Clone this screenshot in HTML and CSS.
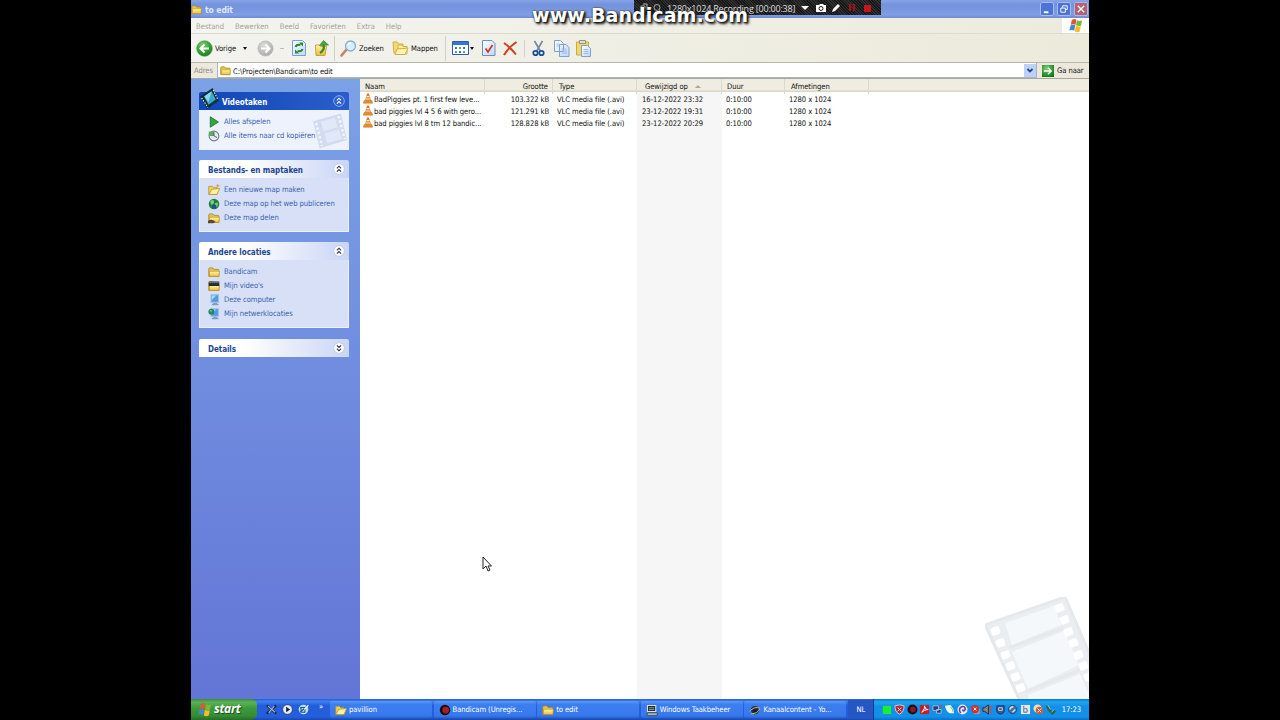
FILE: index.html
```
<!DOCTYPE html>
<html lang="nl">
<head>
    <meta charset="UTF-8">
    <title>to edit</title>
    <link rel="stylesheet" href="styles.css">
</head>
<body>
    <svg class="defs" width="0" height="0">
        <defs>
            <linearGradient id="gFolder" x1="0" y1="0" x2="0" y2="1"><stop offset="0" stop-color="#fff6a8"/><stop offset="1" stop-color="#e8bd3c"/></linearGradient>
            <radialGradient id="gGreen" cx=".4" cy=".3" r=".8"><stop offset="0" stop-color="#83cf7c"/><stop offset=".6" stop-color="#2f9a31"/><stop offset="1" stop-color="#17701c"/></radialGradient>
            <radialGradient id="gGrey" cx=".4" cy=".3" r=".8"><stop offset="0" stop-color="#dcdcd8"/><stop offset="1" stop-color="#a5a5a2"/></radialGradient>
            <linearGradient id="gPage" x1="0" y1="0" x2="1" y2="1"><stop offset="0" stop-color="#fff"/><stop offset="1" stop-color="#bdd6fa"/></linearGradient>
            <symbol id="folder" viewBox="0 0 16 16">
                <path d="M1 4q0-1.500 1.500-1.500h4L8 4.500h5.500q1 0 1 1V14H1z" fill="#e8c34c" stroke="#a67e1e"/>
                <path d="M2 7h13.200L14.500 14H2z" fill="url(#gFolder)" stroke="#b58b25" stroke-width=".8"/>
            </symbol>
            <symbol id="openfolder" viewBox="0 0 16 16">
                <path d="M1 3h5l1.500 2H12v9H1z" fill="#f0d15c" stroke="#b58a25"/>
                <path d="M5 7l10.500-1L12 14H1.500z" fill="#fff09a" stroke="#b88f2c"/>
            </symbol>
            <symbol id="monitor" viewBox="0 0 16 16">
                <path d="M4 1h10v10H4z" fill="#4f9bea" stroke="#a5bcdc" stroke-width="1.500"/>
                <path d="M5 2h6L5 8z" fill="#a9daff"/>
                <path d="M7 12h5v1h2v2H5v-2h2z" fill="#7f9ac6"/>
            </symbol>
            <symbol id="globe" viewBox="0 0 16 16">
                <circle cx="8" cy="8" r="7" fill="#217d4a"/>
                <path d="M3 4q5-3 5 1T4 9zM9 7l4-1q1 5-3 7z" fill="#7fd46c"/>
                <path d="M6 9h5v5H6z" fill="#18568f"/>
            </symbol>
            <symbol id="cone" viewBox="0 0 16 16">
                <path d="M6.500 0h3L13 11H3z" fill="#e07a20"/>
                <path d="M5.800 4h4.400l.7 2H5.100zM4.200 8h7.600l.5 1.500H3.700z" fill="#fff4e6"/>
                <path d="M2 11h12l1.500 4.500H.5z" fill="#ee8f26" stroke="#a95b19" stroke-width=".7"/>
            </symbol>
            <symbol id="flag" viewBox="0 0 16 16">
                <path d="M4 2q3-2 5 0L8 7.500q-2.500-1.500-5 0z" fill="#e5562b"/>
                <path d="M9.500 2.500q3 1.500 5.500 0L14 8q-2.500 1.300-5.500-.3z" fill="#77b83a"/>
                <path d="M2.700 8q2.500-1.600 5-.2L6.600 13.500Q4 12 1.500 13.500z" fill="#3f87dd"/>
                <path d="M8.300 8.200q2.700 1.600 5.400.3L12.500 14.500q-2.500 1.500-5.200 0z" fill="#f6bd26"/>
            </symbol>
            <symbol id="up" viewBox="0 0 12 12">
                <circle cx="6" cy="6" r="5.300" fill="var(--c, #fff)" stroke="var(--r, #b9c5e3)" stroke-width=".8"/>
                <path d="M3.900 5.300L6 3.200l2.100 2.100M3.900 8.700L6 6.600l2.100 2.100" fill="none" stroke="var(--s, #222d48)" stroke-width="1.100"/>
            </symbol>
        </defs>
    </svg>

    <div class="desktop">
        <div class="titlebar">
            <svg class="i11"><use href="#folder"/></svg>
            <span class="title">to edit</span>
            <div class="winbtns">
                <svg class="winbtn" viewBox="0 0 13 13"><path d="M3 9h5v2H3z" fill="#fff"/></svg>
                <svg class="winbtn" viewBox="0 0 13 13"><path d="M5 5V3h5v4H8M3 5.500h5V10H3z" fill="none" stroke="#fff"/></svg>
                <svg class="winbtn close" viewBox="0 0 13 13"><path d="M3 3l7 7M10 3l-7 7" stroke="#fff" stroke-width="1.500"/></svg>
            </div>
        </div>

        <div class="menubar">
            <span>Bestand</span><span>Bewerken</span><span>Beeld</span><span>Favorieten</span><span>Extra</span><span>Help</span>
            <div class="logo"><svg width="15" height="15"><use href="#flag"/></svg></div>
        </div>

        <div class="toolbar">
            <div class="tool back">
                <svg width="17" height="17" viewBox="0 0 17 17"><circle cx="8.500" cy="8.500" r="7.800" fill="url(#gGreen)" stroke="#4b9b4b" stroke-width=".6"/><path d="M13 8.500H5M8.500 4.500l-4 4 4 4" fill="none" stroke="#fff" stroke-width="2"/></svg>
                <span>Vorige</span>
                <i class="caret"></i>
            </div>
            <div class="tool fwd">
                <svg width="17" height="17" viewBox="0 0 17 17"><circle cx="8.500" cy="8.500" r="7.600" fill="url(#gGrey)" stroke="#b4b4b0" stroke-width=".6"/><path d="M4 8.500h8M8.500 4.500l4 4-4 4" fill="none" stroke="#fff" stroke-width="2"/></svg>
                <i class="dash"></i>
            </div>
            <svg class="tool refresh" width="14" height="16" viewBox="0 0 14 16"><path d="M.5.500h10l3 3v12H.5z" fill="url(#gPage)" stroke="#7b9fd2"/><path d="M3.500 7q1-3 5-2M10.500 9q-1 3-5 2" fill="none" stroke="#238a34" stroke-width="2"/><path d="M7 2.500h4v4zM7 13.500H3v-4z" fill="#238a34"/></svg>
            <svg class="tool upfolder" width="14" height="16" viewBox="0 0 14 16"><path d="M.5 5h4l1 1.500h6l-1.500 9H1z" fill="url(#gFolder)" stroke="#c6a63a"/><path d="M5 13q5-3 3.500-8" fill="none" stroke="#3a8c2d" stroke-width="2.200"/><path d="M4.500 5.500L8.500.500l5 4.500z" fill="#4fa43a" stroke="#2d7522" stroke-width=".6"/></svg>
            <div class="tool search">
                <svg width="17" height="17" viewBox="0 0 17 17"><path d="M1.500 15.500l5-6" stroke="#c5825c" stroke-width="2.600" stroke-linecap="round"/><circle cx="10.500" cy="6" r="5" fill="#d5efff" stroke="#88abd0" stroke-width="1.300"/><path d="M8 5q1-2 3-2" stroke="#fff" fill="none" stroke-width="1.300"/></svg>
                <span>Zoeken</span>
            </div>
            <div class="tool maps">
                <svg width="17" height="16" viewBox="0 0 17 16"><path d="M1 2h4l1.500 2H11v9H2z" fill="#f1dc73" stroke="#d2ae45"/><path d="M6 5h4l1 1.500h4V14H6z" fill="#fff3a4" stroke="#d2ae45"/><path d="M5 9l11-1-3 6.500H3z" fill="#fff6b6" stroke="#d2ae45"/></svg>
                <span>Mappen</span>
            </div>
            <div class="tool views">
                <svg width="17" height="14" viewBox="0 0 17 14"><path d="M.5.500h16v13H.5z" fill="#fff" stroke="#295cae"/><path d="M1 1h15v3H1z" fill="#3774d3"/><path d="M3 6h2v2H3zM11 6h2v2h-2zM7 10h2v2H7z" fill="#4b6daa"/><path d="M7 6h2v2H7zM3 10h2v2H3zM11 10h2v2h-2z" fill="#559f94"/></svg>
                <i class="caret"></i>
            </div>
            <svg class="tool check" width="14" height="16" viewBox="0 0 14 16"><path d="M.5.500h9.500l3 3v12H.5z" fill="url(#gPage)" stroke="#6c8fc4"/><path d="M3.500 8.500L6 12l4.500-7" fill="none" stroke="#cf392b" stroke-width="1.800"/></svg>
            <svg class="tool delete" width="15" height="15" viewBox="0 0 15 15"><path d="M1 2q6 4 12 11.500M13.500 1Q6 6 1 14" fill="none" stroke="#d23c1c" stroke-width="2"/></svg>
            <svg class="tool cut" width="13" height="17" viewBox="0 0 13 17"><path d="M2.500 1l5.800 10M10.500 1L4.700 11" stroke="#7888a0" stroke-width="1.700"/><circle cx="3.500" cy="13" r="2.200" fill="none" stroke="#174d9c" stroke-width="1.800"/><circle cx="9.500" cy="13" r="2.200" fill="none" stroke="#174d9c" stroke-width="1.800"/></svg>
            <svg class="tool copy" width="16" height="17" viewBox="0 0 16 17"><path d="M.5.500h6l3 3v8h-9zM5.500 4.500h6.500l3 3v9H5.500z" fill="url(#gPage)" stroke="#7da0d3"/><path d="M7.500 9H12M7.500 11h5.500M7.500 13h5.500M2.500 4h3M2.500 6H5" stroke="#9bb9e3"/></svg>
            <svg class="tool paste" width="16" height="17" viewBox="0 0 16 17"><path d="M.5 2h12v13H.5z" fill="#f2d967" stroke="#cda943"/><path d="M3.500.500h6v3h-6z" fill="#ddd" stroke="#999178"/><path d="M5.500 5.500h6l3 3v8h-9z" fill="url(#gPage)" stroke="#7da0d3"/><path d="M7.500 9.500H12M7.500 11.500h5M7.500 13.500h5" stroke="#9bb9e3"/></svg>
        </div>

        <div class="addressbar">
            <span class="label">Adres</span>
            <div class="field">
                <svg class="i11"><use href="#folder"/></svg>
                <span>C:\Projecten\Bandicam\to edit</span>
                <svg class="drop" viewBox="0 0 12 13"><path d="M3.500 5L6 7.500 8.500 5" fill="none" stroke="#294882" stroke-width="1.800"/></svg>
            </div>
            <svg class="go" viewBox="0 0 13 13"><path d="M0 0h13v13H0z" fill="url(#gGreen)"/><path d="M2 6.500h8M6.500 3L10 6.500 6.500 10" fill="none" stroke="#fff" stroke-width="1.400"/></svg>
            <span class="golabel">Ga naar</span>
        </div>

        <div class="main">
            <div class="sidebar">
                <div class="panel video">
                    <div class="panel-head"><svg class="reel" viewBox="0 0 20 20"><path d="M1 8L13 0l6 12L8 20z" fill="#0d3142"/><path d="M5 8l7-5 4 8-7 5z" fill="#3ba9cd"/><path d="M5 8l7-5-3 10z" fill="#8fd9e8"/><path d="M2.500 9.500l6 9M13.500 2l4.500 9" stroke="#fff" stroke-dasharray="1.300 1.300"/></svg><b>Videotaken</b><svg class="toggle"><use href="#up"/></svg></div>
                    <div class="panel-body">
                        <svg class="ghost" viewBox="0 0 100 100"><path d="M0 22L80 0l17 76-78 24z" fill="#d2dbef"/><path d="M22 23l40-11 9 27-41 12zM33 57l41-12 9 27-43 13z" fill="#e1e8f7"/><path d="M9 27l17 66M73 7l18 66" stroke="#f2f5fc" stroke-width="7" stroke-dasharray="7 6"/></svg>
                        <a><svg class="i12" viewBox="0 0 16 16"><path d="M3 1l11 7-11 7z" fill="#2fa73c" stroke="#176b25"/></svg>Alles afspelen</a>
                        <a><svg class="i12" viewBox="0 0 16 16"><circle cx="8" cy="8" r="6.500" fill="#e5eaed" stroke="#6d7e87" stroke-width="1.500"/><path d="M1 2h7v6H1z" fill="#5fa764"/><path d="M8 3v5l4 2" fill="none" stroke="#435"/></svg>Alle items naar cd kopiëren</a>
                    </div>
                </div>
                <div class="panel files">
                    <div class="panel-head"><b>Bestands- en maptaken</b><svg class="toggle"><use href="#up"/></svg></div>
                    <div class="panel-body">
                        <a><svg class="i12" viewBox="0 0 16 16"><use href="#openfolder"/><path d="M13 0v5M10.500 2.500h5" stroke="#e78b28"/></svg>Een nieuwe map maken</a>
                        <a><svg class="i12"><use href="#globe"/></svg>Deze map op het web publiceren</a>
                        <a><svg class="i12" viewBox="0 0 16 16"><use href="#folder"/><path d="M0 12q4-3 7-1l3 2-3 2H0z" fill="#5b4630"/></svg>Deze map delen</a>
                    </div>
                </div>
                <div class="panel places">
                    <div class="panel-head"><b>Andere locaties</b><svg class="toggle"><use href="#up"/></svg></div>
                    <div class="panel-body">
                        <a><svg class="i12"><use href="#folder"/></svg>Bandicam</a>
                        <a><svg class="i12" viewBox="0 0 16 16"><use href="#folder"/><path d="M1 2h14v6H1z" fill="#252d2e"/><path d="M2 3.500h12" stroke="#d8e4e5" stroke-dasharray="1.500 1.200"/></svg>Mijn video's</a>
                        <a><svg class="i12"><use href="#monitor"/></svg>Deze computer</a>
                        <a><svg class="i12" viewBox="0 0 16 16"><use href="#monitor"/><circle cx="4.500" cy="5" r="4" fill="#238a61"/><path d="M2 4q3-3 3 1" fill="#8ad7aa"/></svg>Mijn netwerklocaties</a>
                    </div>
                </div>
                <div class="panel details">
                    <div class="panel-head"><b>Details</b><svg class="toggle flip"><use href="#up"/></svg></div>
                </div>
            </div>

            <div class="list">
                <div class="row head">
                    <span>Naam</span><span class="num">Grootte</span><span>Type</span><span>Gewijzigd op<i class="sort"></i></span><span>Duur</span><span>Afmetingen</span>
                </div>
                <div class="rows">
                    <div class="row"><span class="name"><svg class="cone"><use href="#cone"/></svg>BadPiggies pt. 1 first few leve...</span><span class="num">103.322 kB</span><span>VLC media file (.avi)</span><span class="date">16-12-2022 23:32</span><span>0:10:00</span><span>1280 x 1024</span></div>
                    <div class="row"><span class="name"><svg class="cone"><use href="#cone"/></svg>bad piggies lvl 4 5 6 with gero...</span><span class="num">121.291 kB</span><span>VLC media file (.avi)</span><span class="date">23-12-2022 19:31</span><span>0:10:00</span><span>1280 x 1024</span></div>
                    <div class="row"><span class="name"><svg class="cone"><use href="#cone"/></svg>bad piggies lvl 8 tm 12 bandic...</span><span class="num">128.828 kB</span><span>VLC media file (.avi)</span><span class="date">23-12-2022 20:29</span><span>0:10:00</span><span>1280 x 1024</span></div>
                </div>
                <svg class="watermark" viewBox="0 0 104 102">
                    <path d="M0 28L80 0L124 102H34z" fill="#eaeef1"/>
                    <path d="M20 26L69 9L76 28L27 48zM27 55L79 34L94 68L43 92zM43 98L95 77L106 102H44z" fill="#f4f8fb"/>
                    <path d="M0 28L80 0M24 51L78 31M40 95L95 73M0 28L34 102M80 0L124 102" fill="none" stroke="#e5e9ec" stroke-width="3"/>
                    <g fill="#fff">
                        <rect id="hole" x="6" y="30" width="9" height="8" rx="2" transform="rotate(-20 10 34)"/>
                        <use href="#hole" x="5" y="12"/><use href="#hole" x="10" y="24"/><use href="#hole" x="15" y="35"/><use href="#hole" x="20" y="46"/><use href="#hole" x="25" y="57"/>
                        <use href="#hole" x="64" y="-23"/><use href="#hole" x="69" y="-11"/><use href="#hole" x="73" y="1"/><use href="#hole" x="78" y="12"/><use href="#hole" x="83" y="24"/><use href="#hole" x="88" y="35"/><use href="#hole" x="93" y="46"/>
                    </g>
                </svg>
            </div>
        </div>

        <div class="taskbar">
            <div class="start"><svg width="15" height="15"><use href="#flag"/></svg><b>start</b></div>
            <div class="quick">
                <svg class="i11" viewBox="0 0 16 16"><path d="M1 2l14 12M15 2L1 14" stroke="#1b2846" stroke-width="3"/><path d="M3 3l10 9M12 3L4 13" stroke="#a8bbd2" stroke-width="1.500"/></svg>
                <svg class="i11" viewBox="0 0 16 16"><circle cx="8" cy="8" r="7" fill="#e9eef5" stroke="#20304a"/><path d="M6 4l6 4-6 4z" fill="#142343"/></svg>
                <svg class="i11" viewBox="0 0 16 16"><circle cx="8" cy="8" r="7" fill="#b9dcf8"/><path d="M3 12L13 3M4 5h6v7H5z" fill="none" stroke="#1b5595" stroke-width="1.600"/><path d="M9 8l6-6" stroke="#fff" stroke-width="2"/></svg>
                <span>»</span>
            </div>
            <div class="tasks">
                <div class="task"><svg class="i12"><use href="#openfolder"/></svg><span>pavillion</span></div>
                <div class="task"><svg class="i12" viewBox="0 0 16 16"><circle cx="8" cy="8" r="7" fill="#1a0e14"/><circle cx="9" cy="8" r="4.500" fill="#a81f20"/></svg><span>Bandicam (Unregis...</span></div>
                <div class="task"><svg class="i12"><use href="#folder"/></svg><span>to edit</span></div>
                <div class="task"><svg class="i12" viewBox="0 0 16 16"><path d="M2 2h11v8H2z" fill="#1c2836" stroke="#d9dfd2" stroke-width="1.500"/><path d="M4 5h7M4 7.500h7" fill="none" stroke="#b9cbbd"/><path d="M2 12h13v3H1z" fill="#d8d6c2" stroke="#25303b"/></svg><span>Windows Taakbeheer</span></div>
                <div class="task"><svg class="i12" viewBox="0 0 16 16"><circle cx="8" cy="8" r="5.500" fill="#262c33"/><path d="M1 10Q7 2 15 6M3 13q8 0 11-6" fill="none" stroke="#c9b994" stroke-width="1.300"/><circle cx="8" cy="9" r="2" fill="#15191f"/></svg><span>Kanaalcontent - Yo...</span></div>
            </div>
            <div class="lang">NL</div>
            <div class="tray">
                <svg viewBox="0 0 12 12"><path d="M2 2h9v9H2z" fill="#19ef32"/></svg>
                <svg viewBox="0 0 12 12"><path d="M1 2l5-1 5 1q0 7-5 9Q1 9 1 2z" fill="#bf2436" stroke="#d4d9df"/><path d="M4 4l4 4M8 4L4 8" stroke="#fff"/></svg>
                <svg viewBox="0 0 12 12"><circle cx="6" cy="6" r="5.500" fill="#251018"/><circle cx="6.500" cy="6" r="3" fill="#8c1b20"/></svg>
                <svg viewBox="0 0 12 12"><path d="M1 1h10v10H1z" fill="#c51f25"/><path d="M3 9q4-4 3-7 1 5 4 4-4 0-7 3" fill="none" stroke="#fff"/></svg>
                <svg viewBox="0 0 12 12"><path d="M1 2h6v5H1zM5 6h5v4H5z" fill="#223d78" stroke="#aebfd6"/><path d="M8 1l3 3M11 1L8 4" stroke="#e43737"/></svg>
                <svg viewBox="0 0 12 12"><path d="M1 2l6-1q4 4 4 9H6Q2 8 1 2z" fill="#f3fbee"/><path d="M7 3q3 3 3 6" stroke="#69bc62" fill="none"/></svg>
                <svg viewBox="0 0 12 12"><circle cx="6" cy="6" r="5.500" fill="#e9e8f7"/><path d="M4 10Q1 5 5 3q4-1 4 3-2 3-3 0" fill="none" stroke="#65408f" stroke-width="1.700"/></svg>
                <svg viewBox="0 0 12 12"><path d="M4 5h7v6H4z" fill="#8d98b2"/><circle cx="5.500" cy="5.500" r="4.500" fill="#cf3330"/><path d="M4 4l3 3M7 4L4 7" stroke="#fff"/></svg>
                <svg viewBox="0 0 12 12"><path d="M1 4h2l4-3v10L3 8H1z" fill="#8e8480" stroke="#2c2832"/><path d="M9 2v8" stroke="#d64935" stroke-width="1.600"/></svg>
                <svg viewBox="0 0 12 12"><path d="M2 2h8v6q-1 3-4 3T2 8z" fill="#3a5b91" stroke="#182f62"/><path d="M4 4h4v3H4z" fill="none" stroke="#c4d6e7"/></svg>
                <svg viewBox="0 0 12 12"><circle cx="6" cy="6" r="4.500" fill="#45719e" stroke="#244a75"/><path d="M3 6q1-3 4-3M6 9l3-3" stroke="#dce9ed" stroke-width="1.500" fill="none"/></svg>
                <svg viewBox="0 0 12 12"><path d="M1 1h10v10H1z" fill="#e4e6e9"/><path d="M4 2v7M4 5h3q2 2 0 4H4" fill="none" stroke="#8193a8" stroke-width="1.500"/></svg>
                <svg viewBox="0 0 12 12"><circle cx="5" cy="5" r="4.500" fill="#f0dfbd"/><circle cx="7" cy="7" r="4" fill="#d65a29"/><path d="M5 5l4 4M9 5L5 9" stroke="#fff"/></svg>
                <svg viewBox="0 0 12 12"><path d="M2 2l3 5 3 3 3-3" fill="none" stroke="#2e6354" stroke-width="3"/><path d="M3 1l3 5M7 9l3-3" stroke="#9ed29e"/></svg>
                <span class="clock">17:23</span>
            </div>
        </div>

        <div class="recorder">
            <svg width="22" height="10" viewBox="0 0 22 10"><path d="M1 3h4v6H1zM3 1h4v6M9 5h3" fill="none" stroke="#bbb"/><circle cx="17" cy="4.500" r="3" fill="none" stroke="#aaa"/><path d="M19 7l2 2" stroke="#aaa"/></svg>
            <span>1280x1024 Recording [00:00:38]</span>
            <svg class="rec-icons" width="74" height="12" viewBox="0 0 74 12"><path d="M0 4h8L4 8z" fill="#fff"/><path d="M15 3h3l1-1h3l1 1h2v7H15z" fill="#fff"/><circle cx="20" cy="6.500" r="2" fill="none" stroke="#222"/><path d="M31 10l1-3 5-5 2 2-5 5z" fill="#fff"/><path d="M48 2h2v7h-2zM52 2h2v7h-2z" fill="#a81217"/><path d="M63 3h7v7h-7z" fill="#c8141b"/></svg>
        </div>
        <div class="brand">www.Bandicam.com</div>

        <svg class="cursor" viewBox="0 0 10 16"><path d="M1 1v12l3-3 2 5 2-1-2-4h3.500z" fill="#fff" stroke="#222"/></svg>
    </div>
</body>
</html>
```
FILE: styles.css
```
body {
    margin: 0;
    height: 720px;
    background: #000;
    overflow: hidden;
    display: flex;
    justify-content: center;
    font-family: "DejaVu Sans Condensed", "DejaVu Sans", sans-serif;
    font-stretch: condensed;
    font-size: 7.6px;
    letter-spacing: -0.08px;
    line-height: 12px;
    white-space: nowrap;
    color: #111;
}
.defs {
    position: absolute;
}
svg {
    flex: none;
    display: block;
}
.desktop {
    position: relative;
    width: 898px;
    height: 720px;
    display: flex;
    flex-direction: column;
    background: #ece9d8;
}
.i11 {
    width: 11px;
    height: 11px;
}
.i12 {
    width: 12px;
    height: 12px;
}

/* title bar */
.titlebar {
    height: 18px;
    flex: none;
    display: flex;
    align-items: center;
    box-sizing: border-box;
    background: linear-gradient(#87a4e8 0, #7593dd 25%, #7a99df 65%, #829fe5 82%, #6d89cf 100%);
}
.title {
    margin-left: 3px;
    padding-top: 2px;
    color: #dfe8fb;
    font-weight: bold;
    font-size: 8.5px;
}
.winbtns {
    display: flex;
    gap: 3px;
    margin-left: auto;
    margin-right: 1px;
}
.winbtn {
    width: 12px;
    height: 12px;
    border: 1px solid #a5bcf0;
    border-radius: 2px;
    background: #4c73d5;
}
.winbtn.close {
    background: #b6616f;
}

/* menu */
.menubar {
    height: 16px;
    flex: none;
    display: flex;
    align-items: center;
    box-sizing: border-box;
    padding-left: 5px;
    gap: 11px;
    color: #a5a398;
    border-bottom: 1px solid #dedbcc;
    background: linear-gradient(90deg, #f4f4f0, #edebdd);
}
.menubar span {
    padding-top: 2px;
    letter-spacing: 0;
}
.logo {
    margin-left: auto;
    width: 27px;
    height: 15px;
    display: flex;
    justify-content: center;
    background: #fff;
}

/* toolbar */
.toolbar {
    height: 29px;
    flex: none;
    display: flex;
    align-items: center;
    box-sizing: border-box;
    padding-left: 5px;
    background: linear-gradient(90deg, #f3f3ef, #eceada);
    border-bottom: 1px solid #b9b7aa;
}
.tool {
    display: flex;
    flex: none;
    align-items: center;
}
.tool span {
    padding-top: 2px;
}
.caret {
    border: 2.5px solid transparent;
    border-top: 3px solid #111;
    border-bottom: 0;
}
.back {
    width: 61px;
}
.back span {
    margin: 0 7px 0 2px;
}
.fwd {
    width: 35px;
}
.dash {
    width: 4px;
    height: 1px;
    margin-left: 6px;
    background: #bbb;
}
.upfolder {
    margin-left: 9px;
}
.search {
    width: 58px;
    height: 25px;
    padding-left: 5px;
    margin-left: 5px;
    box-sizing: border-box;
    border-left: 1px solid #d2d0c4;
}
.search span, .maps span {
    margin-left: 2px;
}
.maps {
    width: 53px;
}
.views {
    height: 25px;
    width: 37px;
    box-sizing: border-box;
    padding-left: 6px;
    border-left: 1px solid #d2d0c4;
}
.views .caret {
    margin-left: 1px;
}
.delete {
    margin-left: 7px;
}
.cut {
    padding-left: 7px;
    margin-left: 6px;
    border-left: 1px solid #d2d0c4;
}
.copy {
    margin-left: 9px;
}
.paste {
    margin-left: 6px;
}

/* address */
.addressbar {
    height: 16px;
    flex: none;
    display: flex;
    align-items: center;
    box-sizing: border-box;
    background: #ece9dc;
    border-bottom: 1px solid #aaa89d;
}
.label {
    width: 26px;
    padding: 1px 0 0 3px;
    box-sizing: border-box;
    color: #8e8d85;
}
.field {
    width: 820px;
    height: 15px;
    display: flex;
    align-items: center;
    box-sizing: border-box;
    padding-left: 2px;
    border: 1px solid #a7b6c4;
    border-top: 0;
    background: #fff;
}
.field .i11 {
    margin-top: 1px;
}
.field span {
    margin-left: 2px;
    padding-top: 3px;
}
.drop {
    width: 12px;
    height: 13px;
    margin-left: auto;
    background: #bfd0f6;
}
.go {
    width: 12px;
    height: 12px;
    margin-left: 5px;
}
.golabel {
    margin-left: 3px;
    padding-top: 1px;
}

/* main area */
.main {
    height: 620px;
    flex: none;
    display: flex;
}
.sidebar {
    width: 169px;
    flex: none;
    box-sizing: border-box;
    padding: 13px 11px 0 8px;
    background: linear-gradient(#7ba2e7, #6375d6);
}
.panel {
    margin-bottom: 10px;
}
.panel-head {
    height: 18px;
    display: flex;
    align-items: center;
    box-sizing: border-box;
    padding: 0 4px 0 9px;
    border-radius: 2px 2px 0 0;
    background: linear-gradient(90deg, #fff 30%, #c9d5f5);
    color: #20468f;
    font-size: 8px;
    letter-spacing: -0.05px;
}
.panel-head b {
    padding-top: 3px;
}
.toggle {
    width: 12px;
    height: 12px;
    margin-left: auto;
    margin-top: -1px;
}
.flip {
    transform: rotate(180deg);
}
.panel-body {
    position: relative;
    box-sizing: border-box;
    border: 1px solid #edf1fb;
    border-top: 0;
    padding: 5px 0 0 8px;
    background: #d7e0f6;
}
.panel-body a {
    position: relative;
    display: flex;
    align-items: center;
    gap: 4px;
    height: 14px;
    line-height: 14px;
    color: #3a62b5;
}
.video .panel-head {
    padding-left: 0;
    background: linear-gradient(90deg, #0f48b5, #2a5dcb);
    color: #fff;
    --c: #2c5fcd;
    --r: #a9c2f4;
    --s: #fff;
}
.video .panel-body {
    height: 40px;
    background: #eef2fc;
}
.reel {
    width: 21px;
    height: 21px;
    margin: -6px 2px 0 0;
}
.ghost {
    position: absolute;
    right: 0;
    top: 3px;
    width: 35px;
    height: 36px;
}
.files .panel-body {
    height: 54px;
}
.places .panel-body {
    height: 68px;
}
.places {
    margin-bottom: 11px;
}

/* file list */
.list {
    position: relative;
    flex: 1;
    overflow: hidden;
    background: linear-gradient(90deg, transparent 277px, #f6f6f6 277px, #f6f6f6 362px, transparent 362px) #fff;
}
.row {
    display: grid;
    grid-template-columns: 125px 68px 84px 85px 63px 84px;
    height: 12px;
    line-height: 14px;
}
.row span {
    padding-left: 4px;
}
.row .name {
    display: flex;
    align-items: flex-start;
    padding-left: 3px;
}
.row .date {
    padding-left: 5px;
    letter-spacing: -0.03px;
}
.row .num {
    text-align: right;
    padding-right: 4px;
}
.cone {
    width: 10px;
    height: 11px;
    margin-right: 1px;
}
.head {
    height: 13px;
    background: linear-gradient(#efede2 80%, #d5d1bf);
}
.head span {
    line-height: 15px;
    padding-left: 5px;
    border-right: 1px solid #dcd9cb;
}
.head span:nth-child(3) {
    padding-left: 6px;
}
.head span:nth-child(4) {
    padding-left: 8px;
}
.head span:nth-child(6) {
    padding-left: 6px;
}
.sort {
    display: inline-block;
    margin-left: 7px;
    border: 3px solid transparent;
    border-top: 0;
    border-bottom: 3px solid #aca899;
    vertical-align: middle;
}
.rows {
    padding-top: 1px;
}
.watermark {
    position: absolute;
    right: 0;
    bottom: 0;
    width: 104px;
    height: 102px;
}

/* taskbar */
.taskbar {
    height: 21px;
    flex: none;
    display: flex;
    align-items: center;
    color: #fff;
    background: linear-gradient(#2561d4 0, #3b81f2 12%, #245edb 30%, #245edb 85%, #1b48ad);
}
.start {
    width: 66px;
    height: 21px;
    display: flex;
    align-items: center;
    box-sizing: border-box;
    padding-left: 6px;
    border-radius: 0 6px 6px 0;
    background: linear-gradient(#3c8b3b, #59b354 15%, #3a993a 45%, #368d35 80%, #276c27);
}
.start b {
    margin: -2px 0 0 2px;
    font: italic bold 12px/18px "Open Sans", sans-serif;
    letter-spacing: -0.25px;
    text-shadow: 1px 1px 1px #1d4e1d;
}
.quick {
    width: 73px;
    display: flex;
    align-items: center;
    box-sizing: border-box;
    padding-left: 9px;
    gap: 5px;
}
.quick span {
    margin: -6px 0 0 5px;
}
.tasks {
    display: grid;
    grid-template-columns: repeat(5, 102px);
    gap: 1.6px;
}
.task {
    height: 17px;
    display: flex;
    align-items: center;
    box-sizing: border-box;
    padding-left: 5px;
    gap: 2px;
    border-radius: 2px;
    background: linear-gradient(#5c99f8, #3c7ff1 20%, #3779ec 85%, #2b63cc);
}
.lang {
    width: 25px;
    height: 19px;
    margin-left: 2px;
    line-height: 20px;
    text-align: center;
    background: #2557c4;
}
.tray {
    flex: 1;
    height: 21px;
    display: flex;
    align-items: center;
    gap: 1.6px;
    padding-left: 7px;
    border-left: 1px solid #16398f;
    background: linear-gradient(#0d75c7, #1ba8f4 14%, #128fe8 35%, #1290ea 85%, #0e6cc0);
}
.tray svg {
    width: 11px;
    height: 11px;
}
.clock {
    margin-left: 4px;
}

/* recording overlay */
.recorder {
    position: absolute;
    left: 443px;
    top: 0;
    width: 247px;
    height: 15px;
    display: flex;
    align-items: center;
    box-sizing: border-box;
    padding-left: 6px;
    background: repeating-linear-gradient(45deg, #171717 0, #171717 1px, #303030 1px, #303030 2px);
    color: #ddd;
    font: 9px/15px "Open Sans", sans-serif;
    letter-spacing: -0.2px;
}
.recorder span {
    margin-left: 5px;
    padding-top: 1px;
}
.rec-icons {
    position: absolute;
    left: 167px;
    top: 2px;
}
.brand {
    position: absolute;
    left: 341px;
    top: 4px;
    font: bold 19px/23px "DejaVu Sans", sans-serif;
    letter-spacing: 0.08px;
    color: #fff;
    text-shadow: 1px 1px 2px #111, 2px 2px 3px #222, 0 0 2px #333;
}
.cursor {
    position: absolute;
    left: 291px;
    top: 556px;
    width: 10px;
    height: 16px;
}
```
